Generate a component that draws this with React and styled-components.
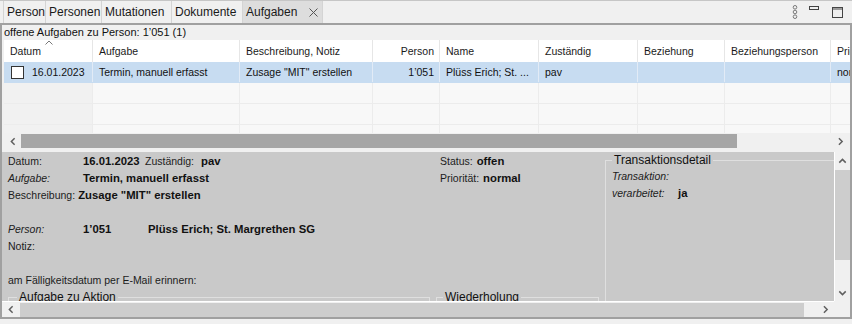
import React from 'react';
import styled, { createGlobalStyle } from 'styled-components';

const GlobalStyle = createGlobalStyle`
  html, body {
    margin: 0;
    padding: 0;
    background: #f0f0f0;
  }
  body {
    font-family: "Liberation Sans", Arial, sans-serif;
    color: #000;
  }
`;

const COLS = '89px 147px 133px 67px 99px 99px 87px 106px 80px';

const Window = styled.div`
  width: 852px;
  height: 324px;
  background: #f0f0f0;
  overflow: hidden;
  display: flex;
  flex-direction: column;
`;

const TabBar = styled.div`
  height: 22px;
  border-top: 1px solid #c6c6c6;
  display: flex;
  align-items: stretch;
  padding-left: 3px;
`;

const Tab = styled.div`
  width: ${(p) => p.$w}px;
  box-sizing: border-box;
  display: flex;
  align-items: center;
  gap: 12px;
  padding: 0 3px;
  font-size: 12px;
  color: #1a1a1a;
  white-space: nowrap;
  border-right: 1px solid #d4d4d4;
  border-left: ${(p) => (p.$first ? '1px solid #d4d4d4' : 'none')};
  background: ${(p) => (p.$active ? '#dddddd' : '#f0f0f0')};
`;

const WindowButtons = styled.div`
  margin-left: auto;
  display: flex;
  align-items: center;
  gap: 8px;
  padding-right: 9px;
`;

const Frame = styled.div`
  height: 296px;
  box-sizing: border-box;
  border: 2px solid #a0a0a0;
  display: flex;
  flex-direction: column;
`;

const Caption = styled.div`
  height: 15px;
  padding-left: 2px;
  font-size: 11px;
  line-height: 15px;
  color: #111;
  white-space: nowrap;
`;

const Table = styled.div`
  margin-left: 2px;
  height: 93px;
  overflow: hidden;
  background: #f8f8f8;
`;

const HeaderRow = styled.div`
  display: grid;
  grid-template-columns: ${COLS};
  height: 22px;
  background: #fff;
`;

const HeaderCell = styled.div`
  position: relative;
  border-right: 1px solid #e6e6e6;
  padding: 0 5px 0 6px;
  display: flex;
  align-items: center;
  justify-content: ${(p) => (p.$right ? 'flex-end' : 'flex-start')};
  font-size: 10.5px;
  color: #1a1a1a;
  white-space: nowrap;
  overflow: hidden;
`;

const SortCaret = styled.svg`
  position: absolute;
  top: 0;
  left: 41px;
`;

const Row = styled.div`
  display: grid;
  grid-template-columns: ${COLS};
  height: 21px;
  box-sizing: border-box;
  border-bottom: 1px solid ${(p) => (p.$selected ? '#c7dcf1' : '#ececec')};
  background: ${(p) => (p.$selected ? '#c7dcf1' : 'transparent')};
`;

const Cell = styled.div`
  border-right: 1px solid ${(p) => (p.$selected ? '#e2ebf6' : '#ececec')};
  padding: 0 5px 0 6px;
  display: flex;
  align-items: center;
  justify-content: ${(p) => (p.$right ? 'flex-end' : 'flex-start')};
  gap: 8px;
  font-size: 10.5px;
  color: #111;
  white-space: nowrap;
  overflow: hidden;
  background: ${(p) => (p.$first && !p.$selected ? '#f1f1f1' : 'transparent')};
`;

const CheckBox = styled.span`
  width: 13px;
  height: 13px;
  box-sizing: border-box;
  margin-left: 1px;
  border: 1px solid #333;
  background: #fff;
  flex: none;
`;

const HScroll = styled.div`
  margin-left: 2px;
  height: 16px;
  display: flex;
  align-items: center;
  background: #f0f0f0;
`;

const ArrowBox = styled.div`
  width: ${(p) => p.$w || 17}px;
  height: ${(p) => p.$h || 16}px;
  flex: none;
  display: flex;
  align-items: center;
  justify-content: center;
`;

const HThumb = styled.div`
  width: ${(p) => p.$w}px;
  height: 14px;
  background: ${(p) => p.$color};
`;

const Spacer = styled.div`
  height: 3px;
`;

const DetailArea = styled.div`
  height: 165px;
  display: grid;
  grid-template-columns: 1fr 16px;
  grid-template-rows: 149px 16px;
`;

const Panel = styled.div`
  background: #c9c9c9;
  overflow: hidden;
`;

const DetailGrid = styled.div`
  display: grid;
  grid-template-columns: 422px 163px 300px;
  grid-template-rows: 138px auto;
  column-gap: 6px;
  padding-left: 6px;
  width: max-content;
`;

const FieldColumn = styled.div`
  grid-column: ${(p) => p.$col};
  grid-row: 1;
  display: flex;
  flex-direction: column;
  padding-left: ${(p) => p.$inset || 0}px;
`;

const Line = styled.div`
  height: 17px;
  display: flex;
  align-items: center;
  font-size: 10.5px;
  color: #1c1c1c;
  white-space: nowrap;
`;

const Label = styled.span`
  font-style: ${(p) => (p.$italic ? 'italic' : 'normal')};
  min-width: ${(p) => (p.$w === undefined ? 75 : p.$w)}px;
  margin-right: ${(p) => p.$gap || 0}px;
`;

const Value = styled.span`
  font-weight: bold;
  font-size: 11.3px;
  color: #111;
  min-width: ${(p) => p.$w || 0}px;
`;

const GroupBox = styled.fieldset`
  grid-column: ${(p) => p.$col};
  grid-row: ${(p) => p.$row};
  margin: ${(p) => (p.$top ? '1px 0 0' : '0')};
  padding: 0 ${(p) => p.$pad || 6}px;
  border: 1px solid #dfdfdf;
  min-width: 0;
  height: ${(p) => p.$h}px;
`;

const GroupTitle = styled.legend`
  padding: 0 2px;
  font-size: 12px;
  line-height: 14px;
  color: #111;
`;

const VScroll = styled.div`
  border-left: 1px solid #fff;
  background: #f0f0f0;
  display: flex;
  flex-direction: column;
`;

const VThumb = styled.div`
  height: 90px;
  margin: 1px 0 0 0;
  background: #cdcdcd;
`;

const Fill = styled.div`
  flex: 1;
`;

const BottomScroll = styled.div`
  border-top: 1px solid #fff;
  background: #f0f0f0;
  display: flex;
  align-items: center;
`;

const Corner = styled.div`
  background: #f0f0f0;
`;

const Chevron = ({ dir }) => {
  const pts = {
    left: '5,1 1.5,4.5 5,8',
    right: '1,1 4.5,4.5 1,8',
    up: '1,5 4.5,1.5 8,5',
    down: '1,1.5 4.5,5 8,1.5',
  }[dir];
  const vertical = dir === 'up' || dir === 'down';
  return (
    <svg width={vertical ? 9 : 6} height={vertical ? 6 : 9} viewBox={vertical ? '0 0 9 6.5' : '0 0 6.5 9'}>
      <polyline points={pts} fill="none" stroke="#5f5f5f" strokeWidth="1.6" />
    </svg>
  );
};

const tabs = [
  { label: 'Person', w: 43 },
  { label: 'Personen', w: 56 },
  { label: 'Mutationen', w: 70 },
  { label: 'Dokumente', w: 71 },
];

const headers = [
  'Datum',
  'Aufgabe',
  'Beschreibung, Notiz',
  'Person',
  'Name',
  'Zuständig',
  'Beziehung',
  'Beziehungsperson',
  'Priorität',
];

export default function App() {
  return (
    <Window>
      <GlobalStyle />
      <TabBar>
        {tabs.map((t, i) => (
          <Tab key={t.label} $w={t.w} $first={i === 0}>
            {t.label}
          </Tab>
        ))}
        <Tab $w={80} $active>
          Aufgaben
          <svg width="9" height="9" viewBox="0 0 9 9">
            <path d="M0.5 0.5 L8.5 8.5 M8.5 0.5 L0.5 8.5" stroke="#555" strokeWidth="1" />
          </svg>
        </Tab>
        <WindowButtons>
          <svg width="6" height="14" viewBox="0 0 6 14">
            <circle cx="3" cy="2.3" r="1.8" fill="none" stroke="#7a7a7a" />
            <circle cx="3" cy="7" r="1.8" fill="none" stroke="#7a7a7a" />
            <circle cx="3" cy="11.7" r="1.8" fill="none" stroke="#7a7a7a" />
          </svg>
          <svg width="10" height="14" viewBox="0 0 10 14" style={{ marginLeft: 3 }}>
            <rect x="0.5" y="1.5" width="9" height="3" fill="none" stroke="#444" />
          </svg>
          <svg width="11" height="14" viewBox="0 0 11 14" style={{ marginLeft: 5 }}>
            <rect x="0.5" y="2.5" width="10" height="10" fill="none" stroke="#444" />
            <line x1="0.5" y1="4" x2="10.5" y2="4" stroke="#444" />
          </svg>
        </WindowButtons>
      </TabBar>

      <Frame>
        <Caption>offene Aufgaben zu Person: 1’051 (1)</Caption>
        <Table>
          <HeaderRow>
            {headers.map((h, i) => (
              <HeaderCell key={h} $right={h === 'Person'}>
                {i === 0 && (
                  <SortCaret width="8" height="5" viewBox="0 0 8 5">
                    <polyline points="0.5,4.5 4,1 7.5,4.5" fill="none" stroke="#777" strokeWidth="1" />
                  </SortCaret>
                )}
                {h}
              </HeaderCell>
            ))}
          </HeaderRow>
          <Row $selected>
            <Cell $selected $first>
              <CheckBox />
              16.01.2023
            </Cell>
            <Cell $selected>Termin, manuell erfasst</Cell>
            <Cell $selected>Zusage "MIT" erstellen</Cell>
            <Cell $selected $right>1’051</Cell>
            <Cell $selected>Plüss Erich; St. ...</Cell>
            <Cell $selected>pav</Cell>
            <Cell $selected />
            <Cell $selected />
            <Cell $selected>normal</Cell>
          </Row>
          {[0, 1, 2].map((r) => (
            <Row key={r}>
              {headers.map((h, i) => (
                <Cell key={h} $first={i === 0} />
              ))}
            </Row>
          ))}
        </Table>
        <HScroll>
          <ArrowBox>
            <Chevron dir="left" />
          </ArrowBox>
          <HThumb $w={716} $color="#a6a6a6" />
          <Fill />
          <ArrowBox $w={18}>
            <Chevron dir="right" />
          </ArrowBox>
        </HScroll>
        <Spacer />

        <DetailArea>
          <Panel>
            <DetailGrid>
              <FieldColumn $col={1}>
                <Line>
                  <Label>Datum:</Label>
                  <Value $w={62}>16.01.2023</Value>
                  <Label $w={0} $gap={7}>Zuständig:</Label>
                  <Value>pav</Value>
                </Line>
                <Line>
                  <Label $italic>Aufgabe:</Label>
                  <Value>Termin, manuell erfasst</Value>
                </Line>
                <Line>
                  <Label $w={0} $gap={3}>Beschreibung:</Label>
                  <Value>Zusage "MIT" erstellen</Value>
                </Line>
                <Line />
                <Line>
                  <Label $italic>Person:</Label>
                  <Value $w={65}>1’051</Value>
                  <Value>Plüss Erich; St. Margrethen SG</Value>
                </Line>
                <Line>
                  <Label>Notiz:</Label>
                </Line>
                <Line />
                <Line>am Fälligkeitsdatum per E-Mail erinnern:</Line>
              </FieldColumn>

              <FieldColumn $col={2} $inset={4}>
                <Line>
                  <Label $w={0} $gap={4}>Status:</Label>
                  <Value>offen</Value>
                </Line>
                <Line>
                  <Label $w={0} $gap={4}>Priorität:</Label>
                  <Value>normal</Value>
                </Line>
              </FieldColumn>

              <GroupBox $col={3} $row="1 / span 2" $h={200} $top>
                <GroupTitle>Transaktionsdetail</GroupTitle>
                <Line>
                  <Label $italic $w={66}>Transaktion:</Label>
                </Line>
                <Line>
                  <Label $italic $w={66}>verarbeitet:</Label>
                  <Value>ja</Value>
                </Line>
              </GroupBox>

              <GroupBox $col={1} $row={2} $h={60} $pad={8}>
                <GroupTitle>Aufgabe zu Aktion</GroupTitle>
              </GroupBox>
              <GroupBox $col={2} $row={2} $h={60}>
                <GroupTitle>Wiederholung</GroupTitle>
              </GroupBox>
            </DetailGrid>
          </Panel>

          <VScroll>
            <ArrowBox $w={15} $h={17}>
              <Chevron dir="up" />
            </ArrowBox>
            <VThumb />
            <Fill />
            <ArrowBox $w={15} $h={17}>
              <Chevron dir="down" />
            </ArrowBox>
          </VScroll>

          <BottomScroll>
            <ArrowBox $w={18} $h={15}>
              <Chevron dir="left" />
            </ArrowBox>
            <HThumb $w={784} $color="#cdcdcd" />
            <Fill />
            <ArrowBox $w={17} $h={15}>
              <Chevron dir="right" />
            </ArrowBox>
          </BottomScroll>
          <Corner />
        </DetailArea>
      </Frame>
    </Window>
  );
}
